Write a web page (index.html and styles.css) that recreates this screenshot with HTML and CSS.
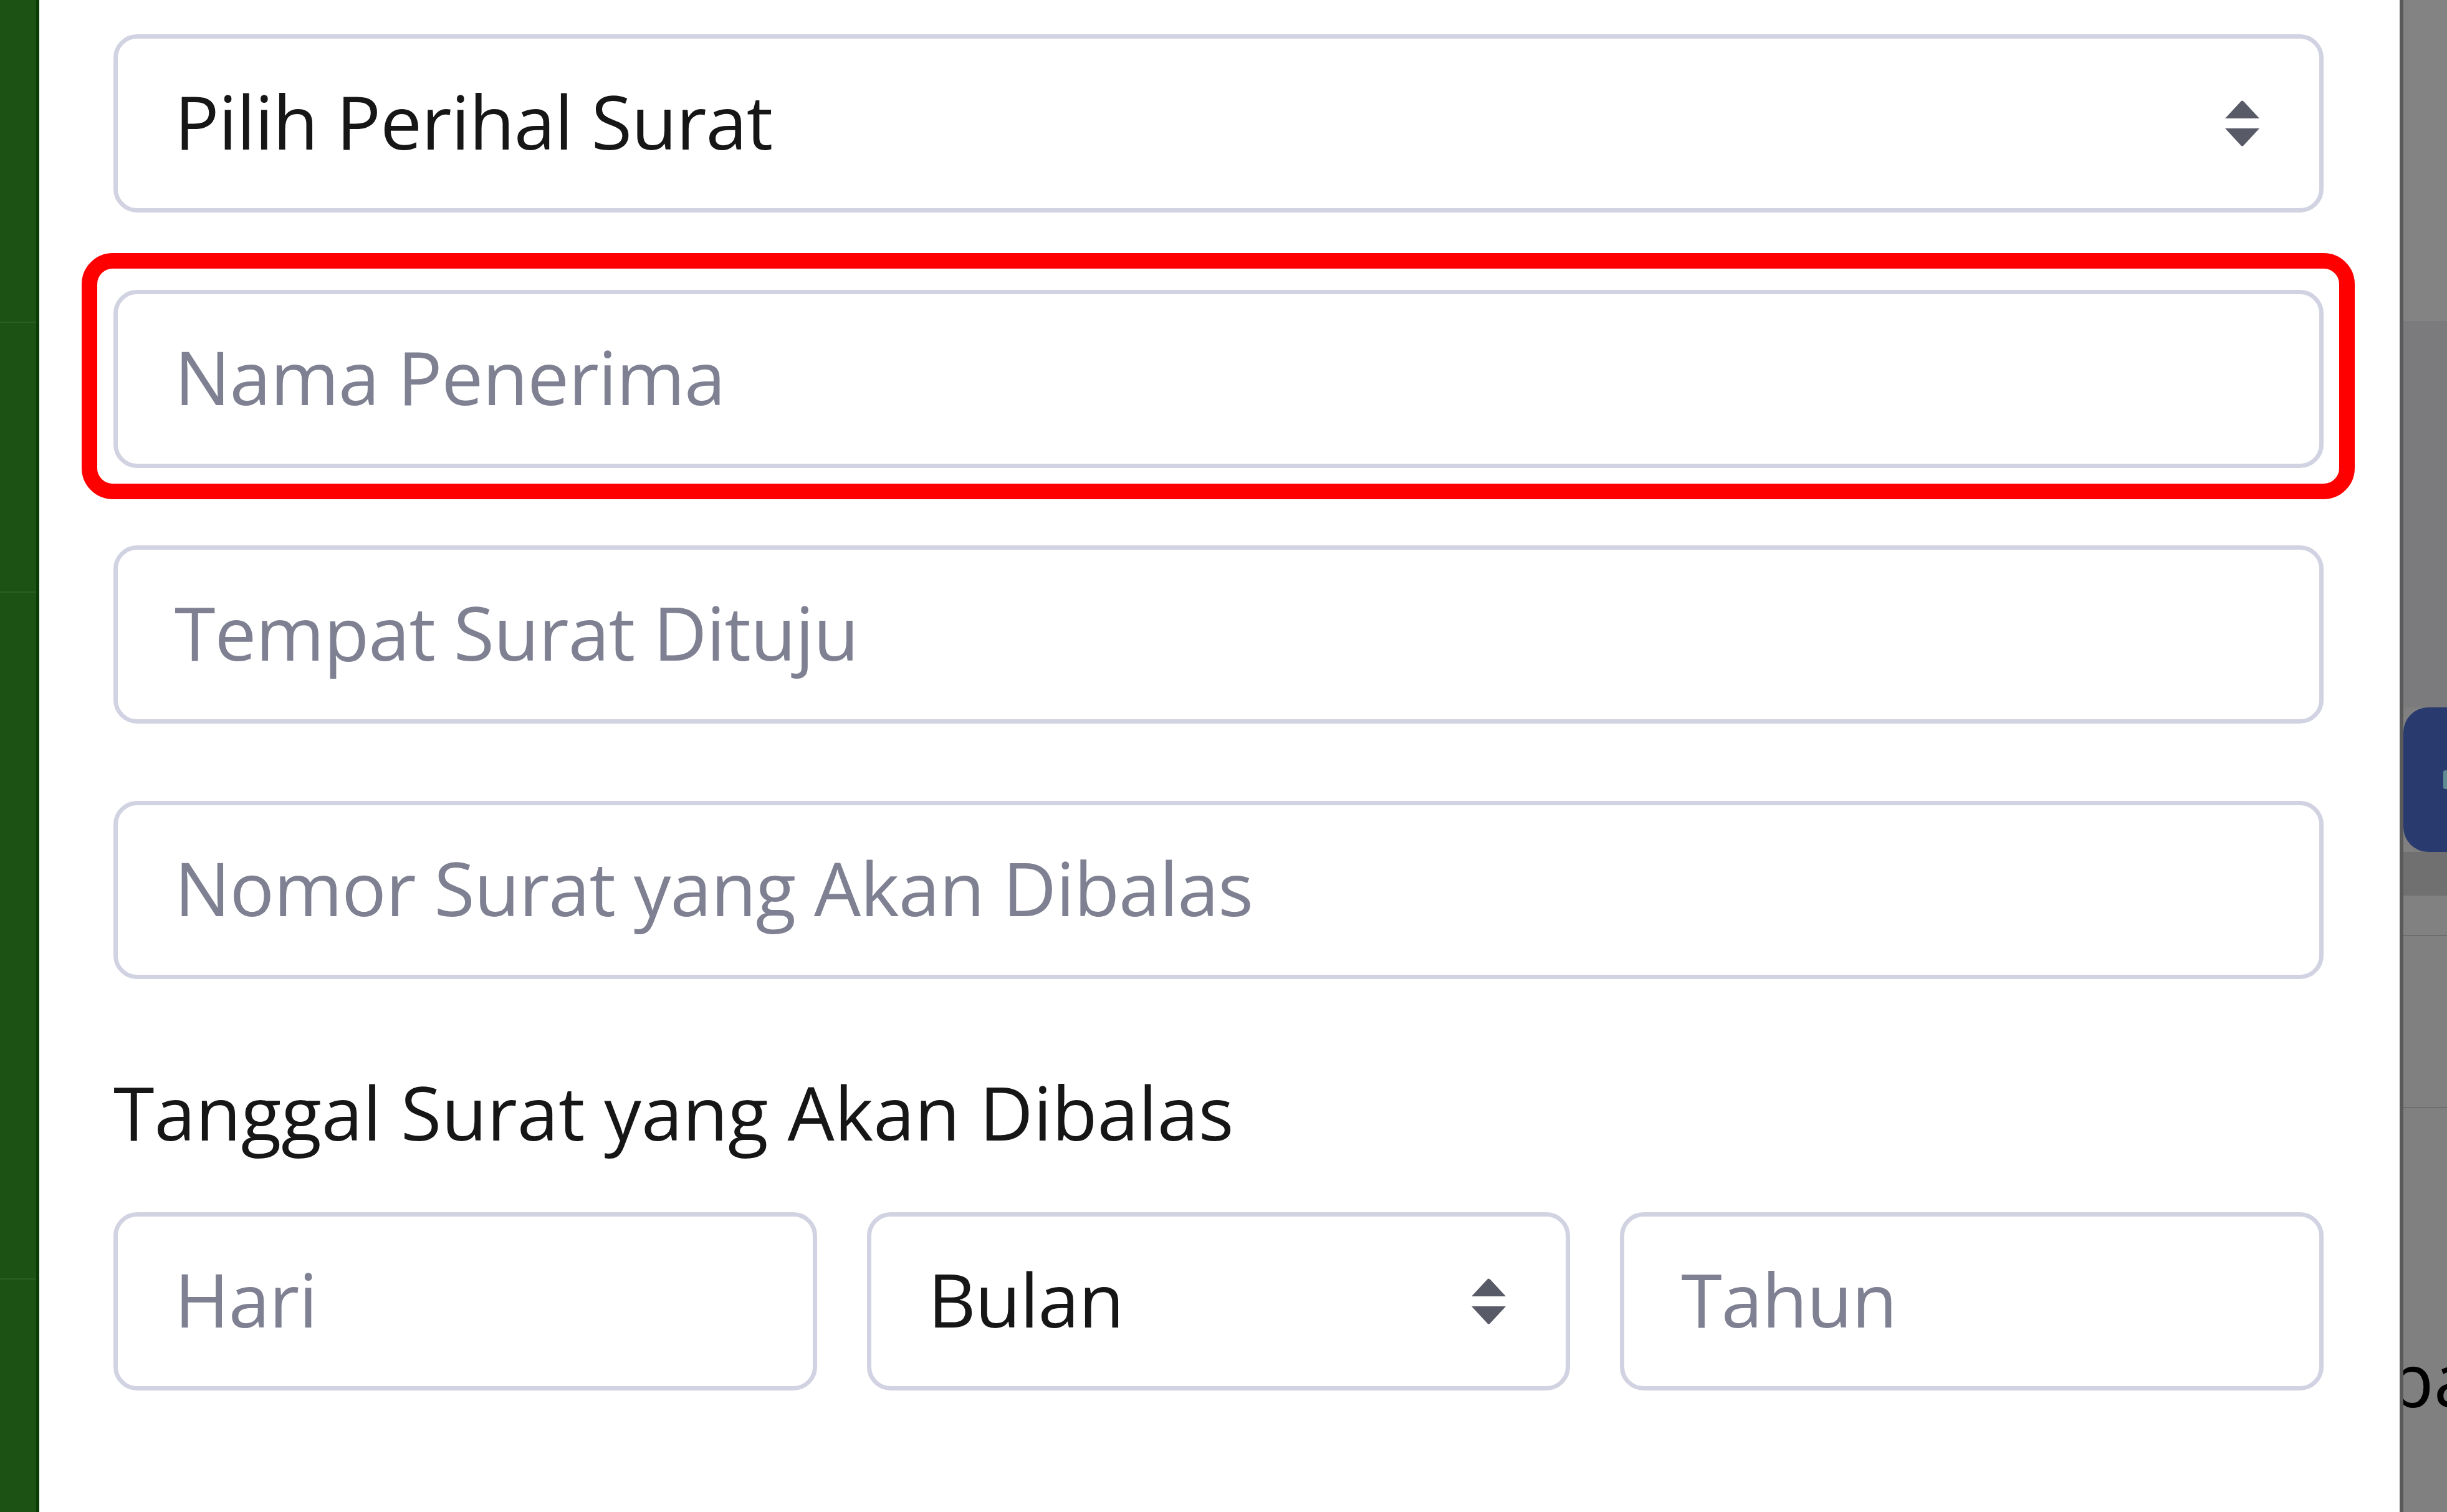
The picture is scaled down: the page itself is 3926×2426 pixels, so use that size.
FILE: index.html
```html
<!DOCTYPE html>
<html lang="id">
<head>
<meta charset="utf-8">
<title>Form Surat</title>
<link rel="stylesheet" href="styles.css">
</head>
<body>
<div class="screen">
  <aside class="sidebar">
    <div class="sb-row sb-r1"></div>
    <div class="sb-row sb-r2"></div>
    <div class="sb-row sb-r3"></div>
    <div class="sb-row sb-r4"></div>
  </aside>

  <main class="modal">
    <form class="form">
      <div class="form-group">
        <div class="select-wrap">
          <select class="control select">
            <option>Pilih Perihal Surat</option>
          </select>
          <svg class="caret" viewBox="0 0 59 76" aria-hidden="true"><path d="M2 30 L27 3 Q29.5 0 32 3 L57 30 Z M2 46 L57 46 L32 73 Q29.5 76 27 73 Z"/></svg>
        </div>
      </div>

      <div class="form-group highlighted">
        <input class="control" type="text" placeholder="Nama Penerima">
        <span class="mark"></span>
      </div>

      <div class="form-group">
        <input class="control" type="text" placeholder="Tempat Surat Dituju">
      </div>

      <div class="form-group">
        <input class="control" type="text" placeholder="Nomor Surat yang Akan Dibalas">
      </div>

      <div class="form-group date-group">
        <label class="label">Tanggal Surat yang Akan Dibalas</label>
        <div class="date-row">
          <input class="control" type="text" placeholder="Hari">
          <div class="select-wrap">
            <select class="control select">
              <option>Bulan</option>
            </select>
            <svg class="caret" viewBox="0 0 59 76" aria-hidden="true"><path d="M2 30 L27 3 Q29.5 0 32 3 L57 30 Z M2 46 L57 46 L32 73 Q29.5 76 27 73 Z"/></svg>
          </div>
          <input class="control" type="text" placeholder="Tahun">
        </div>
      </div>
    </form>
  </main>

  <aside class="behind">
    <div class="bh-row bh-r1"></div>
    <div class="bh-row bh-r2"></div>
    <div class="bh-btn"><span class="bh-glyph"></span></div>
    <div class="bh-row bh-r3"></div>
    <div class="bh-row bh-r4"></div>
    <div class="bh-row bh-r5"></div>
    <div class="bh-row bh-r6"><span class="bh-text">pa</span></div>
  </aside>
</div>
</body>
</html>
```
FILE: styles.css
```css
html, body {
  margin: 0;
  padding: 0;
  background: #ffffff;
}

body {
  width: 3926px;
  height: 2426px;
  overflow: hidden;
  font-family: "Open Sans", "Noto Sans", sans-serif;
}

.screen {
  display: flex;
  height: 2426px;
}

/* left: darkened green sidebar of the page behind the modal */
.sidebar {
  width: 58px;
  flex: none;
  background: #1c5314;
  border-right: 5px solid #0b3b06;
  display: flex;
  flex-direction: column;
}

.sb-row {
  border-bottom: 2px solid #2b5f22;
}
.sb-r1 { height: 516px; }
.sb-r2 { height: 431px; }
.sb-r3 { height: 1100px; }
.sb-r4 { flex: 1; border-bottom: 0; }

/* the white modal */
.modal {
  flex: 1;
  background: #ffffff;
  padding: 55px 122px 0 119px;
  box-sizing: border-box;
}

.form {
  display: flex;
  flex-direction: column;
}

.form-group {
  position: relative;
  margin-bottom: 124px;
}

.date-group {
  margin-bottom: 0;
}

.control {
  display: block;
  width: 100%;
  height: 286px;
  box-sizing: border-box;
  margin: 0;
  padding: 0 91px 8px;
  border: 7px solid #d1d3e2;
  border-radius: 38px;
  background: #ffffff;
  font-family: "Open Sans", "Noto Sans", sans-serif;
  font-size: 119px;
  letter-spacing: -1px;
  color: #161616;
  outline: none;
}

.control::placeholder {
  color: #7f8193;
  opacity: 1;
}

.select-wrap {
  position: relative;
}

.select {
  appearance: none;
  -webkit-appearance: none;
  padding-right: 220px;
}

.caret {
  position: absolute;
  right: 101px;
  top: 105px;
  width: 59px;
  height: 76px;
  fill: #585a68;
  pointer-events: none;
}

/* red annotation ring around the Nama Penerima field */
.mark {
  position: absolute;
  left: -51px;
  right: -50px;
  top: -59px;
  bottom: -50px;
  border: 25px solid #ff0000;
  border-radius: 50px;
  pointer-events: none;
}

.label {
  display: block;
  font-size: 119px;
  line-height: 178px;
  color: #161616;
  margin-bottom: 72px;
}

.date-row {
  display: grid;
  grid-template-columns: 1fr 1fr 1fr;
  column-gap: 80px;
}

/* right: darkened page content behind the modal */
.behind {
  width: 70px;
  flex: none;
  border-left: 6px solid #5a5a5a;
  background: #808080;
  display: flex;
  flex-direction: column;
  overflow: hidden;
}

.bh-row { flex: none; }
.bh-r1 { height: 515px; background: #838383; }
.bh-r2 { height: 620px; background: #7b7b7d; }
.bh-r3 { height: 70px; background: #707071; }
.bh-r4 { height: 63px; background: #818181; border-bottom: 2px solid #6d6d6d; }
.bh-r5 { height: 274px; background: #808080; border-bottom: 2px solid #6d6d6d; }
.bh-r6 { flex: 1; background: #808080; }

.bh-btn {
  height: 232px;
  background: #283a6e;
  border-radius: 40px 0 0 40px;
  display: flex;
  align-items: center;
  justify-content: flex-end;
}

.bh-glyph {
  width: 6px;
  height: 30px;
  background: #5f8c93;
  border-radius: 3px 0 0 3px;
}

.bh-text {
  display: block;
  margin-top: 374px;
  margin-left: -24px;
  font-size: 119px;
  line-height: 119px;
  color: #000000;
  white-space: nowrap;
}
```
